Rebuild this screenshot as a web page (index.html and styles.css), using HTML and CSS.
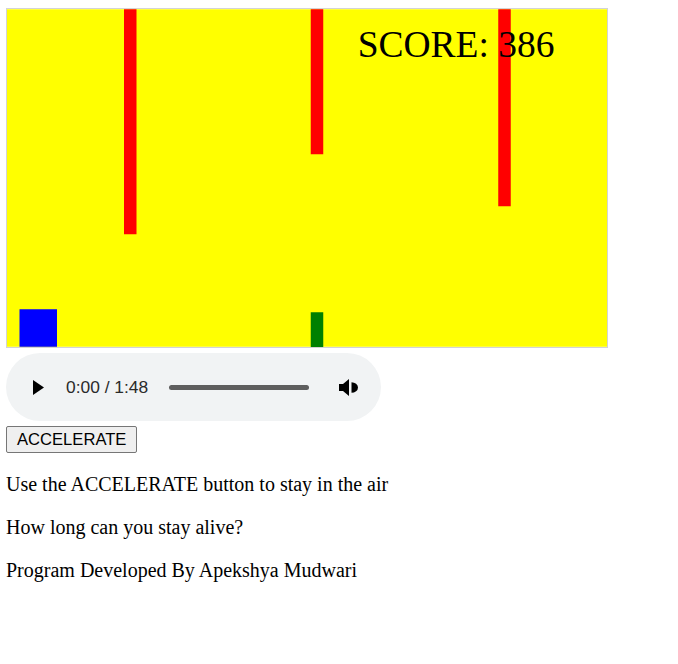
FILE: index.html
```html
<!DOCTYPE html>
<html>
<head>
<meta charset="utf-8">
<link rel="stylesheet" href="styles.css">
</head>
<body>
<svg class="game" width="600" height="338" viewBox="0 0 480 270">
  <rect x="0" y="0" width="480" height="270" fill="#ffff00"/>
  <rect x="93.6" y="0" width="10" height="180" fill="#ff0000"/>
  <rect x="243" y="0" width="10" height="116" fill="#ff0000"/>
  <rect x="393" y="0" width="10" height="157.6" fill="#ff0000"/>
  <rect x="243" y="242.4" width="10" height="28" fill="#008000"/>
  <rect x="10" y="240" width="30" height="30" fill="#0000ff"/>
  <text x="280.5" y="38.5" class="score">SCORE: 386</text>
</svg>
<div class="audio">
  <svg class="play" width="11" height="15" viewBox="0 0 11 15"><polygon points="0,0 11,7.5 0,15" fill="#000"/></svg>
  <span class="time">0:00 / 1:48</span>
  <div class="track"></div>
  <svg class="vol" width="20" height="17" viewBox="0 0 20 17"><path d="M0 5h4v7H0z M4 5 10 0v17L4 12z M12.5 3.2A6.5 5.3 0 0 1 12.5 13.8z" fill="#000"/></svg>
</div>
<div class="controls"><button class="btn">ACCELERATE</button></div>
<p>Use the ACCELERATE button to stay in the air</p>
<p>How long can you stay alive?</p>
<p>Program Developed By Apekshya Mudwari</p>
</body>
</html>
```
FILE: styles.css
```css
html, body { background: #fff; }
body {
  margin: 8px 6px;
  font-family: "Liberation Serif", "Times New Roman", serif;
  font-size: 20px;
  color: #000;
}
.game {
  display: block;
  border: 1px solid #d3d3d3;
}
.score {
  font-family: "Liberation Serif", "Times New Roman", serif;
  font-size: 30px;
  fill: #000;
}
.audio {
  margin-top: 5px;
  width: 375px;
  height: 68px;
  box-sizing: border-box;
  background: #f1f3f4;
  border-radius: 34px;
  display: flex;
  align-items: center;
  padding-left: 27px;
}
.play { display: block; flex: none; }
.time {
  font-family: "Liberation Sans", Arial, sans-serif;
  font-size: 17.4px;
  color: #2a2a2a;
  margin-left: 22px;
}
.track {
  margin-left: 21px;
  width: 140px;
  height: 5px;
  border-radius: 3px;
  background: #5e5e5e;
}
.vol { display: block; margin-left: 30px; flex: none; }
.controls { display: flex; margin-top: 5px; }
.btn {
  font-family: "Liberation Sans", Arial, sans-serif;
  font-size: 16.6px;
  color: #000;
  background: #efefef;
  border: 1px solid #767676;
  border-radius: 2px;
  padding: 2.5px 10px;
  margin: 0;
  line-height: normal;
}
p { margin: 20px 0; }
```
